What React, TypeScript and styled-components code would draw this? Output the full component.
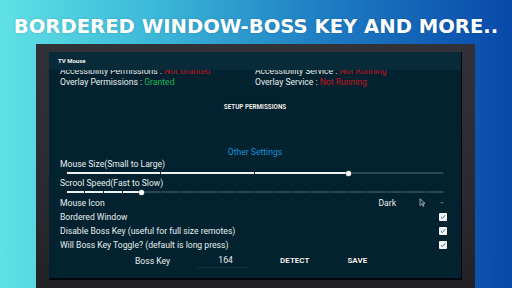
import React from "react";
import styled, { createGlobalStyle } from "styled-components";

const Global = createGlobalStyle`
  html, body { margin: 0; padding: 0; }
  body { width: 512px; height: 288px; overflow: hidden; }
`;

const Page = styled.div`
  width: 512px;
  height: 288px;
  display: flex;
  flex-direction: column;
  background: linear-gradient(90deg, #60e1e6 0%, #3cb8d8 30%, #1f7fc4 62%, #0849aa 100%);
  font-family: Roboto, "Liberation Sans", sans-serif;
  overflow: hidden;
`;

const Headline = styled.h1`
  margin: 0;
  height: 44px;
  box-sizing: border-box;
  padding-top: 9px;
  line-height: 35px;
  font-family: "DejaVu Sans", sans-serif;
  font-weight: 700;
  font-size: 19.6px;
  color: #ffffff;
  text-align: center;
  white-space: nowrap;
  text-shadow: 0 0 2px rgba(0, 40, 80, 0.25);
`;

const Frame = styled.div`
  flex: 1;
  margin: 0 37px 0 36px;
  padding: 8px 13px 0 13px;
  background: linear-gradient(180deg, #313238 0%, #2a2b30 60%, #222226 100%);
  display: flex;
  flex-direction: column;
`;

const Panel = styled.div`
  height: 226px;
  background: #02222f;
  border-right: 1px solid #05060c;
  border-bottom: 2px solid #05050d;
  display: flex;
  flex-direction: column;
  overflow: hidden;
`;

const TitleBar = styled.div`
  height: 18px;
  flex: none;
  background: #082a39;
  padding-left: 9px;
  font-size: 6px;
  font-weight: 700;
  line-height: 17px;
  color: #f2f4f5;
  position: relative;
  z-index: 1;
`;

const Scroll = styled.div`
  flex: 1;
  overflow: hidden;
`;

const Content = styled.div`
  margin-top: -4px;
  display: flex;
  flex-direction: column;
  color: #e9eef0;
  font-size: 8.6px;
`;

const StatusGrid = styled.div`
  display: grid;
  grid-template-columns: 1fr 1fr;
  line-height: 11px;
`;

const StatusCell = styled.div<{ $right?: boolean }>`
  padding-left: ${(p) => (p.$right ? 0 : 11)}px;
  white-space: nowrap;
`;

const Value = styled.span<{ $ok?: boolean }>`
  color: ${(p) => (p.$ok ? "#1fb456" : "#c8141f")};
`;

const SetupButton = styled.div`
  margin-top: 15px;
  text-align: center;
  font-size: 6.3px;
  font-weight: 700;
  line-height: 8px;
  color: #eef2f3;
  text-shadow: 0 0 1px #000;
`;

const SectionTitle = styled.div`
  margin-top: 36px;
  text-align: center;
  line-height: 11px;
  color: #1b90d2;
`;

const Label = styled.div<{ $gap?: number }>`
  margin-top: ${(p) => p.$gap ?? 0}px;
  padding-left: 11px;
  line-height: 11px;
`;

const SliderBox = styled.div`
  position: relative;
  height: 6px;
  margin: 0 18px 0 17px;
`;

const Rail = styled.div`
  position: absolute;
  left: 0;
  right: 0;
  top: 2px;
  height: 2px;
  background: #2b4753;
`;

const RailFill = styled.div`
  position: absolute;
  left: 0;
  top: 2px;
  height: 2px;
  background: #eef1f2;
`;

const Tick = styled.div`
  position: absolute;
  top: 2px;
  width: 1px;
  height: 2px;
  margin-left: -0.5px;
  background: #0f2f3b;
`;

const Thumb = styled.div`
  position: absolute;
  top: 0.5px;
  width: 5px;
  height: 5px;
  margin-left: -2.5px;
  border-radius: 50%;
  background: #ffffff;
  box-shadow: 0 0 0 0.5px #6b7f86;
`;

const OptionRow = styled.div<{ $gap?: number }>`
  margin-top: ${(p) => p.$gap ?? 0}px;
  height: 14px;
  line-height: 14px;
  display: flex;
  align-items: center;
  padding: 0 14px 0 11px;
  white-space: nowrap;
`;

const Spacer = styled.div`
  flex: 1;
`;

const PickValue = styled.span`
  margin-right: 23px;
`;

const PointerIcon = styled.svg`
  width: 7px;
  height: 9px;
  margin-right: 14px;
`;

const DropArrow = styled.div`
  width: 0;
  height: 0;
  margin-right: 3px;
  border-left: 2px solid transparent;
  border-right: 2px solid transparent;
  border-top: 2px solid #4d646d;
`;

const Check = styled.div`
  width: 8px;
  height: 8px;
  border-radius: 1px;
  background: #f4f6f7;
  display: flex;
  align-items: center;
  justify-content: center;
`;

const BossRow = styled.div`
  margin-top: 2.3px;
  height: 14px;
  line-height: 14px;
  display: flex;
  align-items: center;
  padding-left: 86px;
  white-space: nowrap;
`;

const KeyInput = styled.div`
  margin-left: 28px;
  width: 51px;
  height: 14px;
  box-sizing: border-box;
  text-align: center;
  padding-left: 4px;
  border-bottom: 1px solid #0f3442;
  line-height: 13px;
`;

const TextButton = styled.div<{ $gap: number }>`
  margin-left: ${(p) => p.$gap}px;
  font-weight: 700;
  font-size: 8px;
  text-transform: uppercase;
  color: #f1f4f5;
  text-shadow: 0 0 1px #000;
`;

function Slider({ steps, value }: { steps: number; value: number }) {
  const pct = (value / steps) * 100;
  const ticks = Array.from({ length: steps + 1 }, (_, i) => i);
  return (
    <SliderBox>
      <Rail />
      <RailFill style={{ width: `${pct}%` }} />
      {ticks.map((i) => (
        <Tick key={i} style={{ left: `${(i / steps) * 100}%` }} />
      ))}
      <Thumb style={{ left: `${pct}%` }} />
    </SliderBox>
  );
}

function CheckBox() {
  return (
    <Check>
      <svg width="6" height="6" viewBox="0 0 6 6">
        <path d="M0.8 3.2 L2.3 4.6 L5.2 1.3" fill="none" stroke="#3c5862" strokeWidth="0.9" />
      </svg>
    </Check>
  );
}

export default function App() {
  return (
    <>
      <Global />
      <Page>
        <Headline>BORDERED WINDOW-BOSS KEY AND MORE..</Headline>
        <Frame>
          <Panel>
            <TitleBar>TV Mouse</TitleBar>
            <Scroll>
              <Content>
                <StatusGrid>
                  <StatusCell>
                    Accessibility Permissions : <Value>Not Granted</Value>
                  </StatusCell>
                  <StatusCell $right>
                    Accessibility Service : <Value>Not Running</Value>
                  </StatusCell>
                  <StatusCell>
                    Overlay Permissions : <Value $ok>Granted</Value>
                  </StatusCell>
                  <StatusCell $right>
                    Overlay Service : <Value>Not Running</Value>
                  </StatusCell>
                </StatusGrid>
                <SetupButton>SETUP PERMISSIONS</SetupButton>
                <SectionTitle>Other Settings</SectionTitle>
                <Label $gap={1}>Mouse Size(Small to Large)</Label>
                <Slider steps={4} value={3} />
                <Label $gap={2.3}>Scrool Speed(Fast to Slow)</Label>
                <Slider steps={20} value={4} />
                <OptionRow $gap={0.5}>
                  Mouse Icon
                  <Spacer />
                  <PickValue>Dark</PickValue>
                  <PointerIcon viewBox="0 0 7 9">
                    <path
                      d="M1 0.8 L1 7.6 L2.7 6 L4 8.4 L5 7.9 L3.8 5.6 L6 5.4 Z"
                      fill="#1b3945"
                      stroke="#c9d3d6"
                      strokeWidth="0.7"
                      strokeLinejoin="round"
                    />
                  </PointerIcon>
                  <DropArrow />
                </OptionRow>
                <OptionRow>
                  Bordered Window
                  <Spacer />
                  <CheckBox />
                </OptionRow>
                <OptionRow>
                  Disable Boss Key (useful for full size remotes)
                  <Spacer />
                  <CheckBox />
                </OptionRow>
                <OptionRow>
                  Will Boss Key Toggle? (default is long press)
                  <Spacer />
                  <CheckBox />
                </OptionRow>
                <BossRow>
                  Boss Key
                  <KeyInput>164</KeyInput>
                  <TextButton $gap={31}>Detect</TextButton>
                  <TextButton $gap={38}>Save</TextButton>
                </BossRow>
              </Content>
            </Scroll>
          </Panel>
        </Frame>
      </Page>
    </>
  );
}
